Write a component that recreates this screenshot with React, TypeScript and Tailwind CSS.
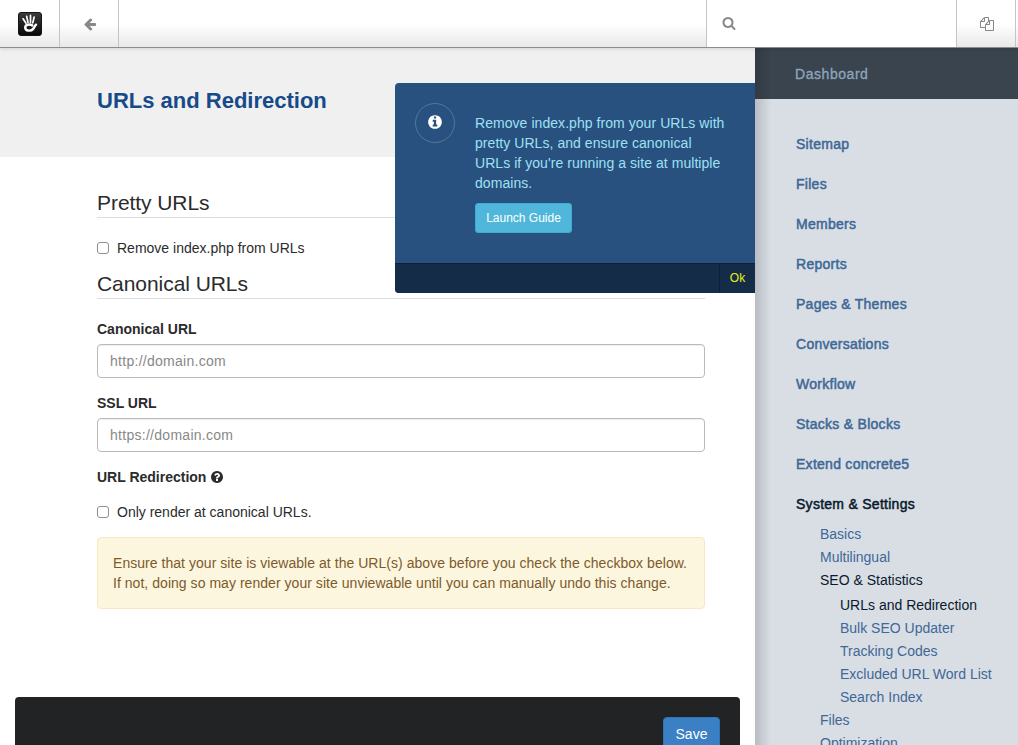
import React from "react";

const PATHS = {
  arrow:
    "M1664 896v128q0 53-32.5 90.5t-84.5 37.5h-704l293 294q38 36 38 90t-38 90l-75 76q-37 37-90 37-52 0-91-37l-651-652q-37-37-37-90 0-52 37-91l651-650q38-38 91-38 52 0 90 38l75 74q38 38 38 91t-38 91l-293 293h704q52 0 84.5 37.5t32.5 90.5z",
  search:
    "M1216 832q0-185-131.5-316.5t-316.5-131.5-316.5 131.5-131.5 316.5 131.5 316.5 316.5 131.5 316.5-131.5 131.5-316.5zm512 832q0 52-38 90t-90 38q-54 0-90-38l-343-342q-179 124-399 124-143 0-273.5-55.5t-225-150-150-225-55.5-273.5 55.5-273.5 150-225 225-150 273.5-55.5 273.5 55.5 225 150 150 225 55.5 273.5q0 220-124 399l343 343q37 37 37 90z",
  info:
    "M1152 1376v-160q0-14-9-23t-23-9h-96v-512q0-14-9-23t-23-9h-320q-14 0-23 9t-9 23v160q0 14 9 23t23 9h96v320h-96q-14 0-23 9t-9 23v160q0 14 9 23t23 9h448q14 0 23-9t9-23zm-128-896v-160q0-14-9-23t-23-9h-192q-14 0-23 9t-9 23v160q0 14 9 23t23 9h192q14 0 23-9t9-23zm640 416q0 209-103 385.5t-279.5 279.5-385.5 103-385.5-103-279.5-279.5-103-385.5 103-385.5 279.5-279.5 385.5-103 385.5 103 279.5 279.5 103 385.5z",
  question:
    "M1024 1376v-192q0-14-9-23t-23-9h-192q-14 0-23 9t-9 23v192q0 14 9 23t23 9h192q14 0 23-9t9-23zm256-672q0-88-55.5-163t-138.5-116-170-41q-243 0-371 213-15 24 8 42l132 100q7 6 19 6 16 0 25-12 53-68 86-92 34-24 86-24 48 0 85.5 26t37.5 59q0 38-20 61t-68 45q-63 28-115.5 86.5t-52.5 125.5v36q0 14 9 23t23 9h192q14 0 23-9t9-23q0-19 21.5-49.5t54.5-49.5q32-18 49-28.5t46-35 44.5-48 28-60.5 12.5-81zm384 192q0 209-103 385.5t-279.5 279.5-385.5 103-385.5-103-279.5-279.5-103-385.5 103-385.5 279.5-279.5 385.5-103 385.5 103 279.5 279.5 103 385.5z",
  files:
    "M1696 384q40 0 68 28t28 68v1216q0 40-28 68t-68 28h-960q-40 0-68-28t-28-68v-288h-544q-40 0-68-28t-28-68v-672q0-40 20-88t48-76l408-408q28-28 76-48t88-20h416q40 0 68 28t28 68v328q68-40 128-40h416zm-544 213l-299 299h299v-299zm-640-384l-299 299h299v-299zm196 647l316-316v-416h-384v416q0 40-28 68t-68 28h-416v640h512v-256q0-40 20-88t48-76zm956 804v-1152h-384v416q0 40-28 68t-68 28h-416v640h896z",
};

function Icon({ name, className }: { name: keyof typeof PATHS; className: string }) {
  return (
    <svg viewBox="0 0 1792 1792" fill="currentColor" className={className} aria-hidden="true">
      <path d={PATHS[name]} />
    </svg>
  );
}

function Logo() {
  return (
    <svg viewBox="0 0 24 24" className="size-6" aria-hidden="true">
      <defs>
        <linearGradient id="logo-bg" x1="0" y1="0" x2="0" y2="1">
          <stop offset="0" stopColor="#3c3c3c" />
          <stop offset="1" stopColor="#080808" />
        </linearGradient>
      </defs>
      <rect x="0.5" y="0.5" width="23" height="23" rx="2.5" fill="url(#logo-bg)" stroke="#151515" />
      <g fill="none" stroke="#fff" strokeLinecap="round">
        <path d="M5.100 6.800L8 11.300M8.700 4.300l1.300 6.200M12.500 3.400v7M16.100 5.200l-1.300 5.600" strokeWidth="1.700" />
        <path d="M14.200 13.400c-2.400-1.400-6.900-1.100-7 2 .1 3.900 5.800 4.100 8 1.500 1-1.300 1.600-3 2.800-4.200" strokeWidth="2.400" />
      </g>
    </svg>
  );
}

const sections = [
  "Sitemap",
  "Files",
  "Members",
  "Reports",
  "Pages & Themes",
  "Conversations",
  "Workflow",
  "Stacks & Blocks",
  "Extend concrete5",
];

const seoPages = ["Bulk SEO Updater", "Tracking Codes", "Excluded URL Word List", "Search Index"];

function TopBar() {
  return (
    <header className="relative z-20 flex h-12 shrink-0 border-b border-[#8c8c8c] bg-linear-to-b from-white from-50% to-[#e9e9e9] text-[#888] shadow-[0_1px_4px_rgba(0,0,0,0.12)]">
      <a className="flex w-[60px] items-center justify-center border-r border-[#c4c4c4]">
        <Logo />
      </a>
      <a className="flex w-[59px] items-center justify-center border-r border-[#c4c4c4] pl-0.5">
        <Icon name="arrow" className="size-3.5" />
      </a>
      <div className="flex-1" />
      <div className="flex w-[251px] items-center border-x border-[#c4c4c4] bg-white pl-[15px]">
        <Icon name="search" className="mb-0.5 size-3.5" />
      </div>
      <a className="flex w-[59px] items-center justify-center border-r border-[#c4c4c4] pl-0.5">
        <Icon name="files" className="size-3.5" />
      </a>
      <div className="w-0.5" />
    </header>
  );
}

function Field({ label, placeholder }: { label: string; placeholder: string }) {
  return (
    <div className="mb-[15px]">
      <label className="mb-[5px] block font-bold">{label}</label>
      <input
        placeholder={placeholder}
        className="block h-[34px] w-full rounded border border-[#bbb] bg-white px-3 tracking-[0.28px] shadow-[inset_0_1px_1px_rgba(0,0,0,0.075)] placeholder:text-[#888]"
      />
    </div>
  );
}

function Check({ label }: { label: string }) {
  return (
    <label className="flex h-5 items-center">
      <input
        type="checkbox"
        className="mr-2 size-3 shrink-0 appearance-none rounded-[3px] border border-[#8f8f8f] bg-white"
      />
      <span>{label}</span>
    </label>
  );
}

function Notice() {
  return (
    <aside className="absolute top-[35px] right-0 z-10 flex h-[210px] w-[360px] flex-col overflow-hidden rounded-l bg-[#28517f]">
      <div className="flex flex-1 px-5 pt-5">
        <div className="flex size-10 shrink-0 items-center justify-center rounded-full border border-[#54769d] text-white">
          <Icon name="info" className="mb-0.5 size-4" />
        </div>
        <div className="ml-5 pt-2.5 text-[#9fe0f4]">
          <p className="tracking-[0.055px] whitespace-nowrap">
            Remove index.php from your URLs with
            <br />
            pretty URLs, and ensure canonical
            <br />
            URLs if you're running a site at multiple
            <br />
            domains.
          </p>
          <button className="mt-2.5 h-[30px] w-[97px] rounded-[3px] border border-[#3aadd2] bg-[#50b7da] text-xs text-white">
            Launch Guide
          </button>
        </div>
      </div>
      <div className="flex h-[30px] justify-end border-t border-[#09213f] bg-[#152c48]">
        <button className="w-9 border-l border-[#09213f] pb-0.5 text-xs text-[#e6f01a]">Ok</button>
      </div>
    </aside>
  );
}

function Sidebar() {
  return (
    <nav className="relative flex w-[263px] shrink-0 flex-col overflow-hidden bg-[#d9dee5] text-[#3e6897]">
      <div className="flex h-[51px] shrink-0 items-center bg-[#3a444e] pl-10 tracking-[0.55px] text-[#8fa5bd] [-webkit-text-stroke:0.3px]">
        Dashboard
      </div>
      <div className="pt-[35px] pl-[41px] whitespace-nowrap">
        <ul className="flex flex-col gap-5 tracking-[0.27px] [-webkit-text-stroke:0.5px]">
          {sections.map((label) => (
            <li key={label}>{label}</li>
          ))}
          <li className="text-[#0a1a2e]">System &amp; Settings</li>
        </ul>
        <ul className="mt-[9px] pl-6 leading-[23px]">
          <li>Basics</li>
          <li>Multilingual</li>
          <li className="text-[#0a1a2e]">SEO &amp; Statistics</li>
          <li className="pt-0.5 pl-5">
            <ul>
              <li className="text-[#0a1a2e]">URLs and Redirection</li>
              {seoPages.map((p) => (
                <li key={p}>{p}</li>
              ))}
            </ul>
          </li>
          <li>Files</li>
          <li>Optimization</li>
        </ul>
      </div>
      <div className="absolute inset-y-0 left-0 w-4 bg-linear-to-r from-black/15 to-transparent" />
    </nav>
  );
}

export default function App() {
  return (
    <div className="flex h-[745px] w-[1018px] flex-col overflow-hidden bg-white font-['Liberation_Sans',Arial,sans-serif] text-sm leading-5 text-[#2b2b2b]">
      <TopBar />
      <div className="flex min-h-0 flex-1">
        <main className="relative flex min-w-0 flex-1 flex-col">
          <div className="h-[109px] shrink-0 bg-[#f0f0f0] px-[97px] pt-10">
            <h1 className="text-[22px] leading-[26px] font-bold text-[#164a8a]">URLs and Redirection</h1>
          </div>
          <div className="w-[802px] px-[97px] pt-[33px]">
            <h2 className="h-7 border-b border-[#ddd] text-[21px] leading-[25px] tracking-[-0.06px]">Pretty URLs</h2>
            <div className="mt-5">
              <Check label="Remove index.php from URLs" />
            </div>
            <h2 className="mt-[13px] mb-5 h-7 border-b border-[#ddd] text-[21px] leading-[25px] tracking-[-0.06px]">
              Canonical URLs
            </h2>
            <Field label="Canonical URL" placeholder="http://domain.com" />
            <Field label="SSL URL" placeholder="https://domain.com" />
            <div className="flex items-center gap-1 font-bold">
              URL Redirection
              <Icon name="question" className="size-3.5" />
            </div>
            <div className="mt-[15px]">
              <Check label="Only render at canonical URLs." />
            </div>
            <div className="mt-[15px] h-[72px] rounded border border-[#f9e6c5] bg-[#fcf6df] p-[15px] tracking-[0.04px] whitespace-nowrap text-[#7d5a2c]">
              Ensure that your site is viewable at the URL(s) above before you check the checkbox below.
              <br />
              If not, doing so may render your site unviewable until you can manually undo this change.
            </div>
          </div>
          <div className="mx-[15px] mt-auto flex h-12 justify-end rounded-t bg-[#222324] pt-5 pr-5">
            <button className="h-[34px] w-[57px] rounded border border-[#2f73b8] bg-[#3b7fc4] text-white">Save</button>
          </div>
          <Notice />
        </main>
        <Sidebar />
      </div>
    </div>
  );
}
